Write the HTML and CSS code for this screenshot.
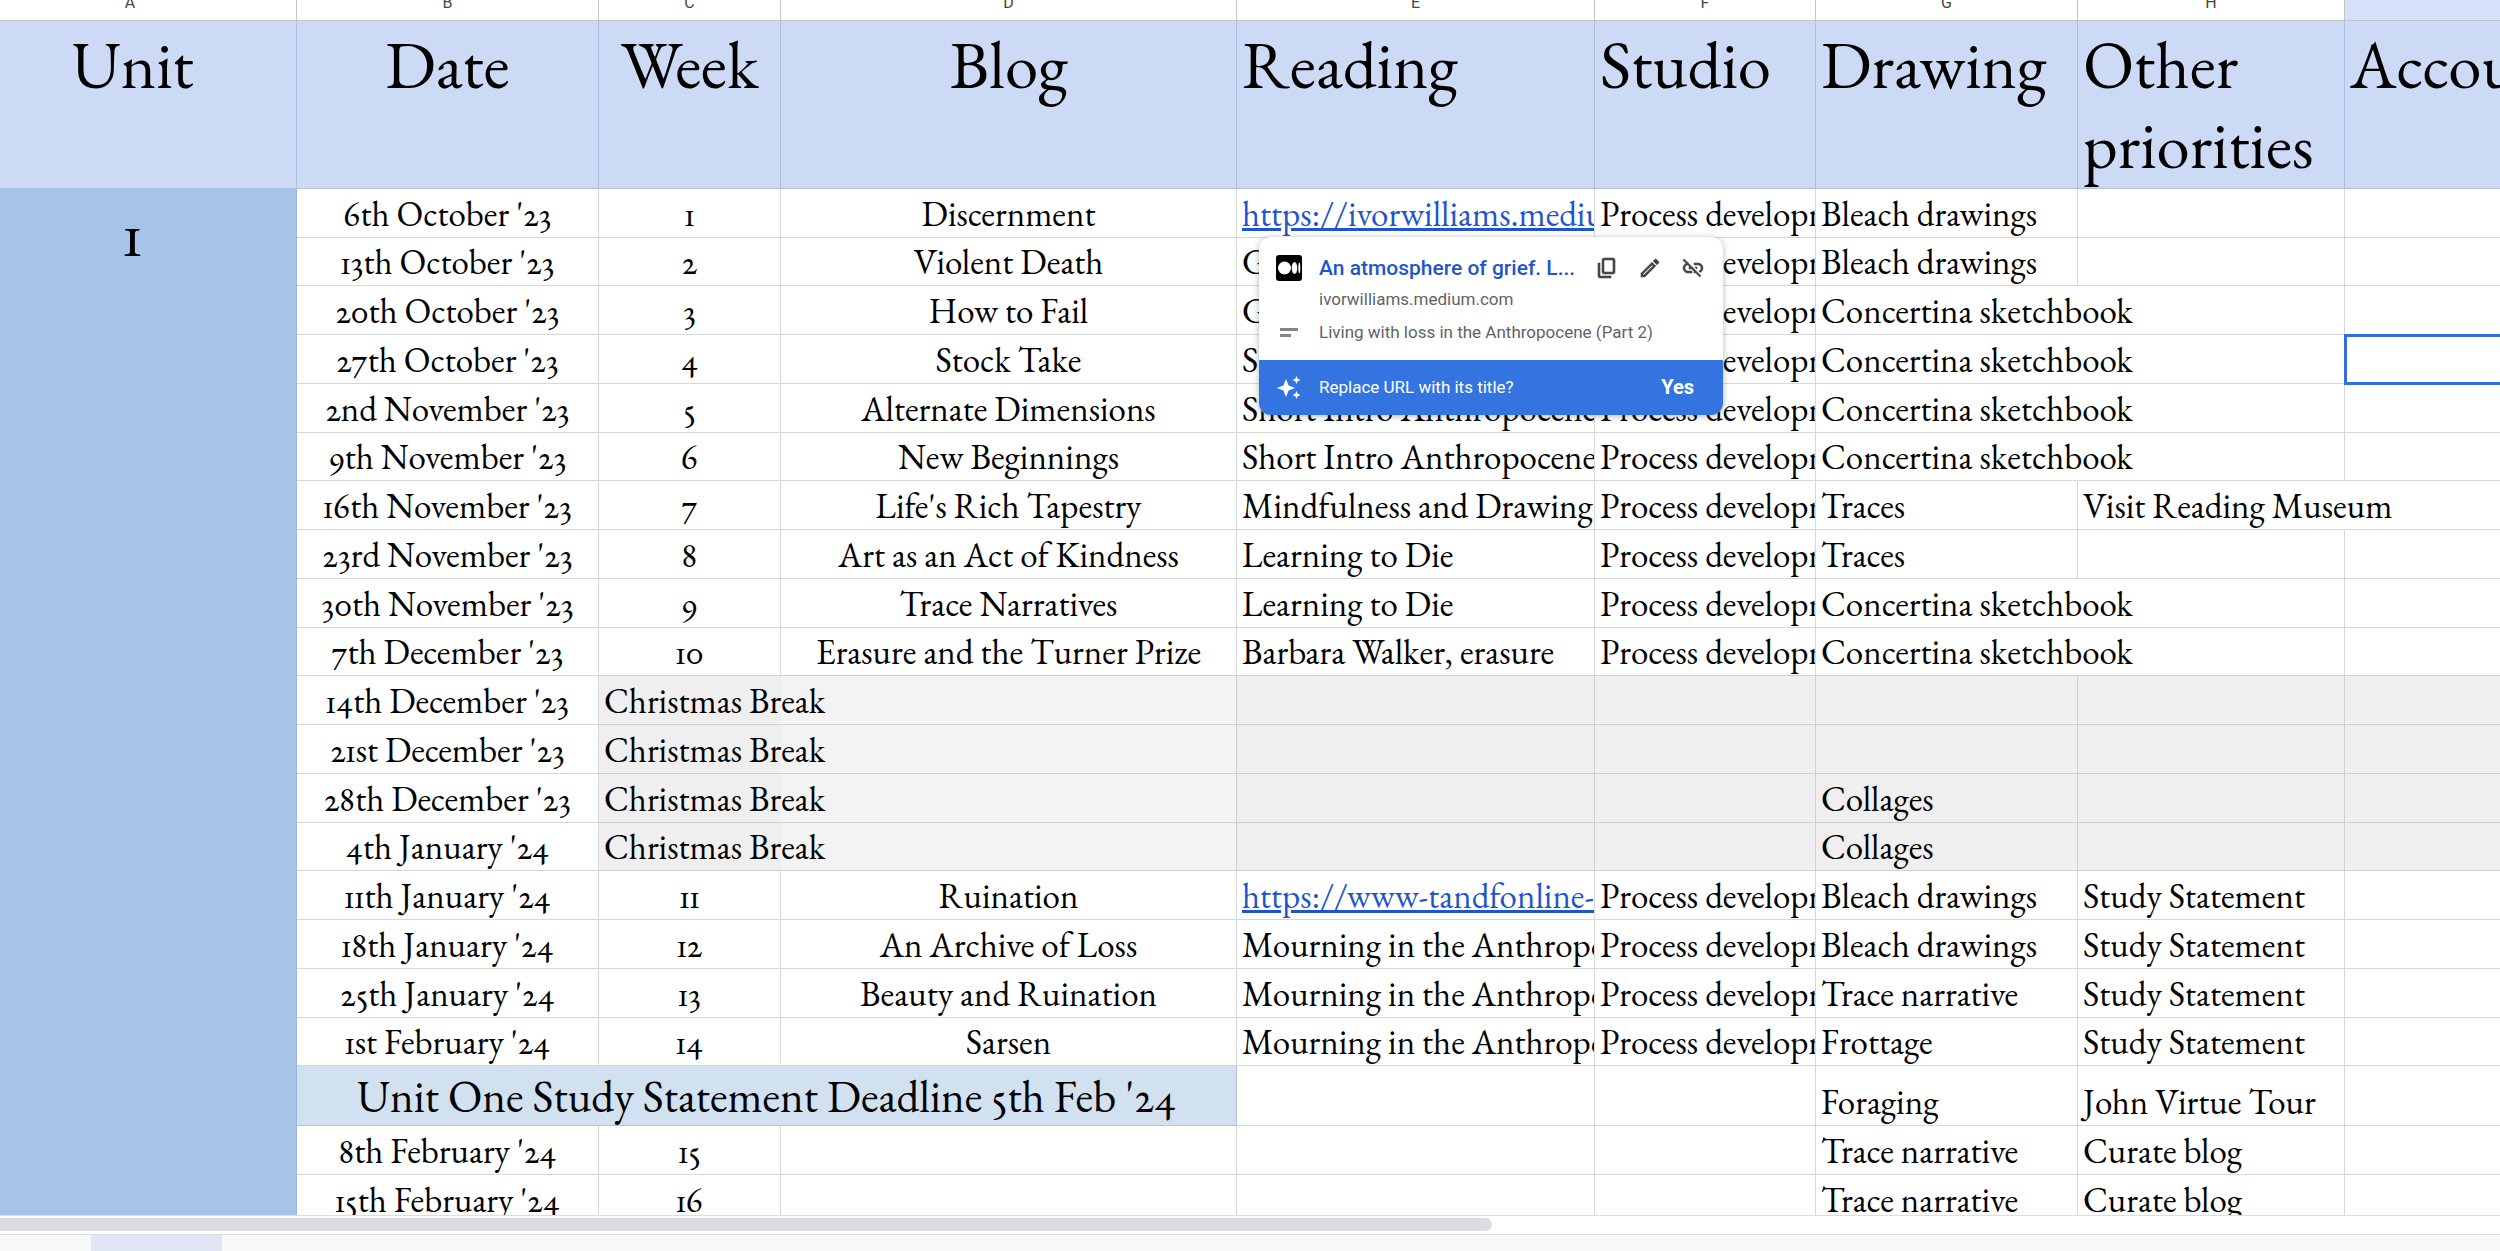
FILE: index.html
```html
<!DOCTYPE html>
<html lang="en">
<head>
  <meta charset="UTF-8" />
  <title>Study planner</title>
  <link rel="stylesheet" href="styles.css">
</head>
<body>

  <main class="sheet">
    <table class="grid">
      <colgroup>
        <col class="col-a"><col class="col-b"><col class="col-c"><col class="col-d"><col class="col-e">
        <col class="col-f"><col class="col-g"><col class="col-h"><col>
      </colgroup>
      <thead>
        <tr class="letters">
          <th class="unit">A</th><th>B</th><th>C</th><th>D</th><th>E</th><th>F</th><th>G</th><th>H</th><th class="active"></th>
        </tr>
        <tr class="titles">
          <th class="unit">Unit</th>
          <th>Date</th>
          <th>Week</th>
          <th>Blog</th>
          <th class="left">Reading</th>
          <th class="left">Studio</th>
          <th class="left">Drawing</th>
          <th class="left">Other priorities</th>
          <th class="left">Accou</th>
        </tr>
      </thead>
      <tbody>
        <!-- Unit 1 -->
        <tr>
          <td class="unit" rowspan="21">1</td>
          <td class="mid">6th October '23</td><td class="mid">1</td><td class="mid">Discernment</td>
          <td class="clip"><a href="#">https://ivorwilliams.medium.com</a></td>
          <td class="clip">Process development</td><td>Bleach drawings</td><td></td><td></td>
        </tr>
        <tr>
          <td class="mid">13th October '23</td><td class="mid">2</td><td class="mid">Violent Death</td>
          <td class="clip">G</td>
          <td class="clip">Process development</td><td>Bleach drawings</td><td></td><td></td>
        </tr>
        <tr>
          <td class="mid">20th October '23</td><td class="mid">3</td><td class="mid">How to Fail</td>
          <td class="clip">G</td>
          <td class="clip">Process development</td><td class="spill">Concertina sketchbook</td><td></td><td></td>
        </tr>
        <tr>
          <td class="mid">27th October '23</td><td class="mid">4</td><td class="mid">Stock Take</td>
          <td class="clip">Short Intro Anthropocene</td>
          <td class="clip">Process development</td><td class="spill">Concertina sketchbook</td><td></td><td class="selected"></td>
        </tr>
        <tr>
          <td class="mid">2nd November '23</td><td class="mid">5</td><td class="mid">Alternate Dimensions</td>
          <td class="clip">Short Intro Anthropocene</td>
          <td class="clip">Process development</td><td class="spill">Concertina sketchbook</td><td></td><td></td>
        </tr>
        <tr>
          <td class="mid">9th November '23</td><td class="mid">6</td><td class="mid">New Beginnings</td>
          <td class="clip">Short Intro Anthropocene</td>
          <td class="clip">Process development</td><td class="spill">Concertina sketchbook</td><td></td><td></td>
        </tr>
        <tr>
          <td class="mid">16th November '23</td><td class="mid">7</td><td class="mid">Life's Rich Tapestry</td>
          <td class="clip">Mindfulness and Drawing</td>
          <td class="clip">Process development</td><td>Traces</td><td class="spill">Visit Reading Museum</td><td></td>
        </tr>
        <tr>
          <td class="mid">23rd November '23</td><td class="mid">8</td><td class="mid">Art as an Act of Kindness</td>
          <td class="clip">Learning to Die</td>
          <td class="clip">Process development</td><td>Traces</td><td></td><td></td>
        </tr>
        <tr>
          <td class="mid">30th November '23</td><td class="mid">9</td><td class="mid">Trace Narratives</td>
          <td class="clip">Learning to Die</td>
          <td class="clip">Process development</td><td class="spill">Concertina sketchbook</td><td></td><td></td>
        </tr>
        <tr class="before-break">
          <td class="mid">7th December '23</td><td class="mid">10</td><td class="mid">Erasure and the Turner Prize</td>
          <td class="clip">Barbara Walker, erasure</td>
          <td class="clip">Process development</td><td class="spill">Concertina sketchbook</td><td></td><td></td>
        </tr>
        <!-- Christmas -->
        <tr class="break">
          <td class="mid">14th December '23</td><td class="spill">Christmas Break</td><td class="pale"></td>
          <td></td><td></td><td></td><td></td><td></td>
        </tr>
        <tr class="break">
          <td class="mid">21st December '23</td><td class="spill">Christmas Break</td><td class="pale"></td>
          <td></td><td></td><td></td><td></td><td></td>
        </tr>
        <tr class="break">
          <td class="mid">28th December '23</td><td class="spill">Christmas Break</td><td class="pale"></td>
          <td></td><td></td><td>Collages</td><td></td><td></td>
        </tr>
        <tr class="break">
          <td class="mid">4th January '24</td><td class="spill">Christmas Break</td><td class="pale"></td>
          <td></td><td></td><td>Collages</td><td></td><td></td>
        </tr>
        <!-- Spring -->
        <tr>
          <td class="mid">11th January '24</td><td class="mid">11</td><td class="mid">Ruination</td>
          <td class="clip"><a href="#">https://www-tandfonline-com</a></td>
          <td class="clip">Process development</td><td>Bleach drawings</td><td>Study Statement</td><td></td>
        </tr>
        <tr>
          <td class="mid">18th January '24</td><td class="mid">12</td><td class="mid">An Archive of Loss</td>
          <td class="clip">Mourning in the Anthropocene</td>
          <td class="clip">Process development</td><td>Bleach drawings</td><td>Study Statement</td><td></td>
        </tr>
        <tr>
          <td class="mid">25th January '24</td><td class="mid">13</td><td class="mid">Beauty and Ruination</td>
          <td class="clip">Mourning in the Anthropocene</td>
          <td class="clip">Process development</td><td>Trace narrative</td><td>Study Statement</td><td></td>
        </tr>
        <tr>
          <td class="mid">1st February '24</td><td class="mid">14</td><td class="mid">Sarsen</td>
          <td class="clip">Mourning in the Anthropocene</td>
          <td class="clip">Process development</td><td>Frottage</td><td>Study Statement</td><td></td>
        </tr>
        <tr class="deadline-row">
          <td class="deadline" colspan="3">Unit One Study Statement Deadline 5th Feb '24</td>
          <td></td><td></td><td>Foraging</td><td>John Virtue Tour</td><td></td>
        </tr>
        <tr>
          <td class="mid">8th February '24</td><td class="mid">15</td><td></td>
          <td></td><td></td><td>Trace narrative</td><td>Curate blog</td><td></td>
        </tr>
        <tr>
          <td class="mid">15th February '24</td><td class="mid">16</td><td></td>
          <td></td><td></td><td>Trace narrative</td><td>Curate blog</td><td></td>
        </tr>
      </tbody>
    </table>

    <!-- Link preview -->
    <aside class="preview">
      <div class="preview-top">
        <svg class="favicon" viewBox="0 0 26 26">
          <rect width="26" height="26" rx="3" fill="#000"/>
          <circle cx="8.500" cy="13" r="6.500" fill="#fff"/>
          <ellipse cx="18.500" cy="13" rx="2.800" ry="6" fill="#fff"/>
          <ellipse cx="23.300" cy="13" rx="1" ry="5.400" fill="#fff"/>
        </svg>
        <a class="preview-title" href="#">An atmosphere of grief. L...</a>
        <div class="tools">
          <button aria-label="Copy link">
            <svg viewBox="0 0 24 24"><path d="M18 2H9C7.900 2 7 2.900 7 4v12c0 1.100.900 2 2 2h9c1.100 0 2-.900 2-2V4c0-1.100-.900-2-2-2zm0 14H9V4h9v12zM3 7v13c0 1.100.900 2 2 2h11v-2H5V7H3z"/></svg>
          </button>
          <button aria-label="Edit link">
            <svg viewBox="0 0 24 24"><path d="M14.060 9.020l.920.920L5.920 19H5v-.920l9.060-9.060M17.660 3c-.250 0-.510.100-.700.290l-1.830 1.830 3.750 3.750 1.830-1.830c.390-.390.390-1.020 0-1.410l-2.340-2.340c-.200-.200-.450-.290-.710-.290zm-3.600 3.190L3 17.250V21h3.750L17.810 9.940l-3.750-3.750z"/></svg>
          </button>
          <button aria-label="Remove link">
            <svg viewBox="0 0 24 24"><path d="M17 7h-4v1.900h4c1.710 0 3.100 1.390 3.100 3.100 0 1.430-.980 2.630-2.310 2.980l1.460 1.460C20.880 15.610 22 13.950 22 12c0-2.760-2.240-5-5-5zm-1 4h-2.190l2 2H16v-2zM2 4.270l3.110 3.110C3.290 8.120 2 9.910 2 12c0 2.760 2.240 5 5 5h4v-1.900H7c-1.710 0-3.100-1.390-3.100-3.100 0-1.590 1.210-2.900 2.760-3.070L8.730 11H8v2h2.730L13 15.270V17h1.730l4.010 4L20 19.740 3.270 3 2 4.270z"/></svg>
          </button>
        </div>
      </div>
      <p class="preview-site">ivorwilliams.medium.com</p>
      <div class="preview-desc">
        <svg viewBox="0 0 26 26"><path d="M4 9h18v3H4zM4 15h11v3H4z"/></svg>
        <p>Living with loss in the Anthropocene (Part 2)</p>
      </div>
      <div class="preview-bar">
        <svg viewBox="0 0 26 26"><path d="M10 5l2.600 6.400L19 14l-6.400 2.600L10 23l-2.600-6.400L1 14l6.400-2.600zM20.500 2l1.200 2.800 2.800 1.200-2.800 1.200-1.200 2.800-1.200-2.800L16.500 6l2.800-1.200zM20.500 17l1.200 2.800 2.800 1.200-2.800 1.200-1.200 2.800-1.200-2.800-2.800-1.200 2.800-1.200z"/></svg>
        <span>Replace URL with its title?</span>
        <button>Yes</button>
      </div>
    </aside>
  </main>

  <div class="scroll"><div class="thumb"></div></div>
  <footer class="tabs"><div class="tab"></div></footer>

</body>
</html>
```
FILE: styles.css
```css
* {
  box-sizing: border-box;
}
body {
  margin: 0;
  height: 100vh;
  display: flex;
  flex-direction: column;
  overflow: hidden;
  background-color: #fff;
  color: #000;
  font-family: "EB Garamond", "Liberation Serif", serif;
  font-variant-numeric: oldstyle-nums proportional-nums;
}
.sheet {
  position: relative;
  flex: 1;
  min-height: 0;
  overflow: hidden;
}

/* Grid */
.grid {
  width: calc(100% + 140px);
  margin-top: -15px;
  table-layout: fixed;
  border-collapse: separate;
  border-spacing: 0;
}
.col-a { width: 297px; }
.col-b { width: 302px; }
.col-c { width: 182px; }
.col-d { width: 456px; }
.col-e { width: 358px; }
.col-f { width: 221px; }
.col-g { width: 262px; }
.col-h { width: 267px; }

th, td {
  border-right: 1px solid #d6d7d7;
  border-bottom: 1px solid #d6d7d7;
  font-weight: normal;
}
.letters th {
  height: 36px;
  padding: 0;
  border-color: #c2c4c2;
  color: #444746;
  font-family: Roboto, sans-serif;
  font-size: 16px;
}
.letters .active {
  background-color: #d5e1fb;
}
.titles th {
  padding: 4px 5px 3px;
  background-color: #ccdaf5;
  border-color: #b1c0e0;
  font-size: 67px;
  line-height: 80px;
  text-align: center;
  vertical-align: top;
}
.titles .left {
  text-align: left;
}
td {
  height: 49px;
  padding: 0 5px 4px;
  font-size: 35px;
  line-height: 38px;
  white-space: nowrap;
  vertical-align: bottom;
}
tbody tr:nth-child(4n+2) td {
  height: 48px;
}
.mid {
  text-align: center;
}
.clip {
  overflow: hidden;
}
.spill {
  border-right-color: transparent;
}
td a {
  color: #1f55cc;
}

.letters .unit, .titles .unit, td.unit {
  padding-right: 36px;
}
td.unit {
  padding-top: 4px;
  background-color: #a6c4e7;
  border-right-color: #9bb6d9;
  font-size: 67px;
  line-height: 80px;
  text-align: center;
  vertical-align: top;
}

.before-break td:not(:first-child), .break td:not(:first-child) {
  border-bottom-color: #cfcfcf;
}
.break td:not(:first-child) {
  background-color: #efefef;
  border-right-color: #cfcfcf;
}
.break .spill:not(:first-child) {
  border-right-color: #efefef;
}
.break .pale:not(:first-child) {
  background-color: #f3f3f3;
}
.deadline-row td {
  height: 60px;
}
.deadline-row .deadline {
  padding-bottom: 6px;
  background-color: #d2e1f0;
  border-color: #b2c5d6;
  font-size: 45px;
  line-height: 46px;
  text-align: center;
}
.selected {
  outline: 3px solid #2f70de;
  outline-offset: -2px;
}

/* Link preview */
.preview {
  position: absolute;
  top: 237px;
  left: 1259px;
  width: 464px;
  border-radius: 12px;
  overflow: hidden;
  background-color: #fff;
  box-shadow: 0 1px 6px rgba(60, 64, 67, 0.4);
  color: #5f6368;
  font-family: Roboto, sans-serif;
  font-size: 17px;
  font-variant-numeric: normal;
}
.preview p {
  margin: 0;
}
.preview-top {
  display: flex;
  align-items: center;
  gap: 17px;
  padding: 14px 18px 0 17px;
  height: 47px;
}
.favicon {
  width: 26px;
  height: 26px;
}
.preview-title {
  flex: 1;
  color: #1f55cc;
  font-size: 21px;
  font-weight: 500;
  text-decoration: none;
  white-space: nowrap;
}
.tools {
  display: flex;
  gap: 19px;
}
.tools button {
  display: flex;
  padding: 0;
  border: none;
  background: none;
  cursor: pointer;
}
.tools svg {
  width: 24px;
  height: 24px;
  fill: #444746;
  stroke: #444746;
  stroke-width: 0.6;
}
.preview-site {
  padding-left: 60px;
  line-height: 30px;
}
.preview-desc {
  display: flex;
  align-items: center;
  gap: 17px;
  padding: 0 17px 10px;
  height: 46px;
}
.preview-desc svg {
  width: 26px;
  height: 26px;
  fill: #80868b;
}
.preview-bar {
  display: flex;
  align-items: center;
  gap: 17px;
  height: 55px;
  padding: 0 29px 2px 17px;
  background-color: #3474e0;
  color: #fff;
}
.preview-bar svg {
  width: 26px;
  height: 26px;
  fill: #fff;
}
.preview-bar button {
  margin-left: auto;
  padding: 0;
  border: none;
  background: none;
  color: #fff;
  font-family: inherit;
  font-size: 20px;
  font-weight: bold;
  cursor: pointer;
}

/* Bottom strip */
.scroll {
  height: 19px;
  padding-top: 2px;
  border-top: 1px solid #dcdddd;
}
.thumb {
  width: calc(60% - 8px);
  height: 13px;
  border-radius: 0 7px 7px 0;
  background-color: #dadce0;
}
.tabs {
  height: 17px;
  border-top: 1px solid #dcdfdf;
  background-color: #f8f9fb;
}
.tab {
  width: 131px;
  height: 100%;
  margin-left: 91px;
  background-color: #e0e6f4;
}
```
